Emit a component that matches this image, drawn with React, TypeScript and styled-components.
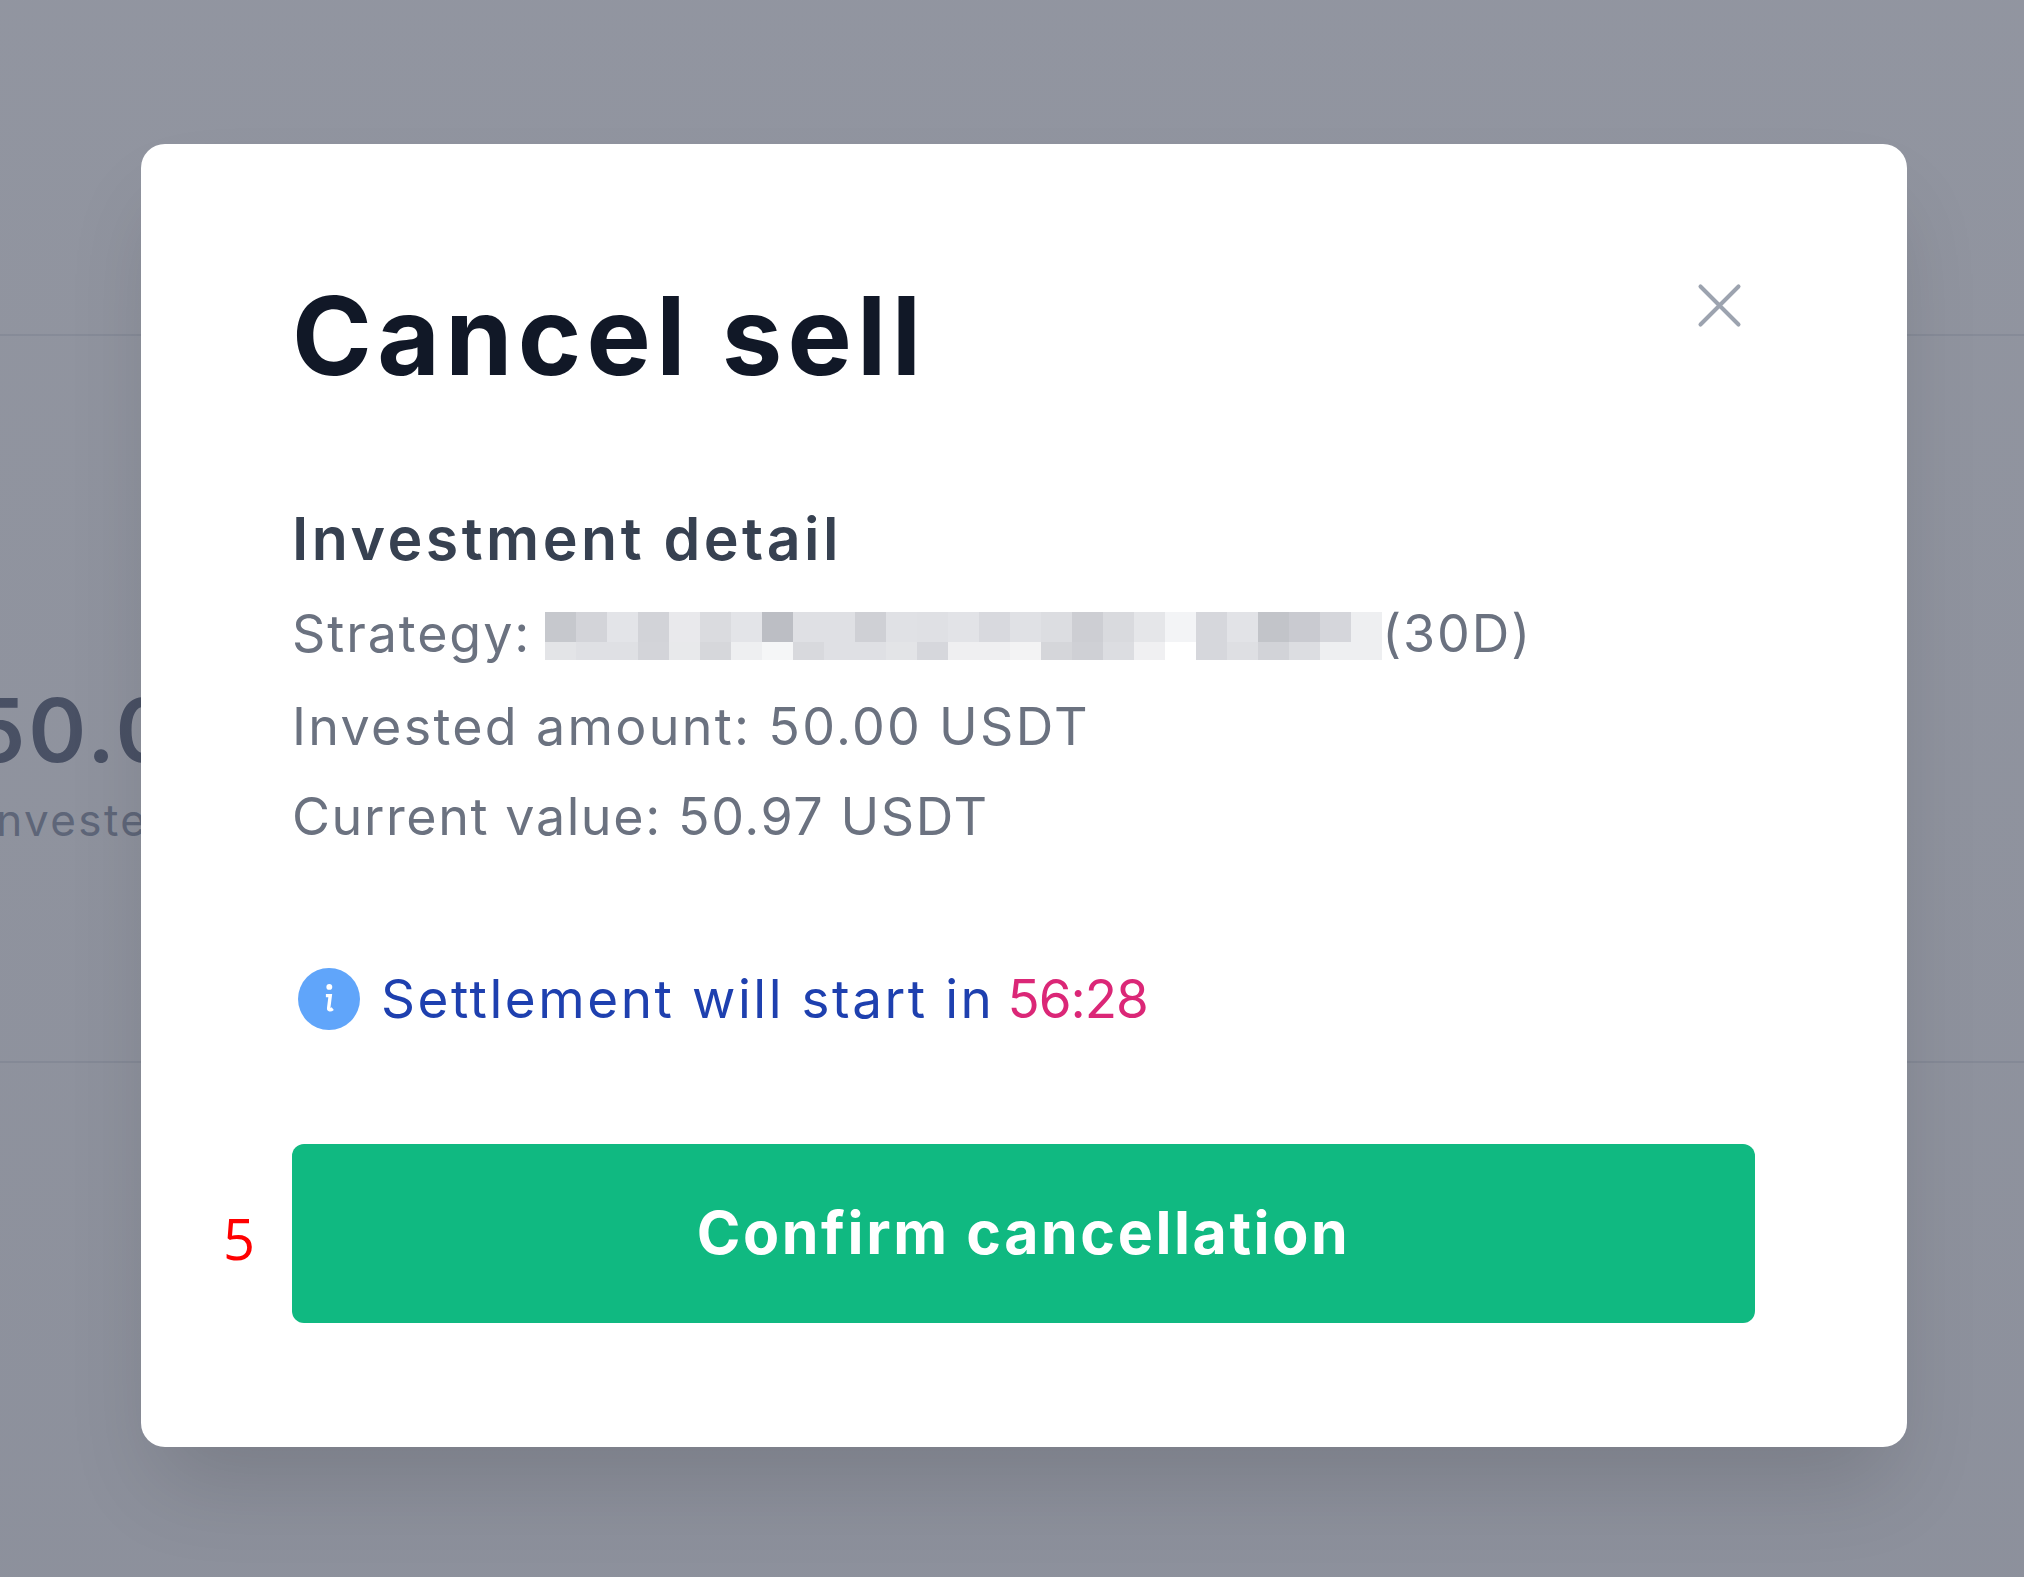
import styled, { createGlobalStyle } from "styled-components";

const GlobalStyle = createGlobalStyle`
  html, body {
    margin: 0;
    height: 100%;
    overflow: hidden;
    background: #fff;
    font-family: "Inter", "Noto Sans", sans-serif;
  }
  #root {
    height: 100%;
  }
`;

const Page = styled.div`
  position: relative;
  width: 2024px;
  height: 1577px;
  overflow: hidden;
  background: #fff;
`;

const Section = styled.div<{ $height: number }>`
  height: ${(p) => p.$height}px;
  border-bottom: 2px solid #eceef1;
  box-sizing: border-box;
  overflow: hidden;
`;

const Stat = styled.div`
  margin: 348px 0 0 -30px;
`;

const StatValue = styled.div`
  font-size: 88px;
  line-height: 92px;
  font-weight: 600;
  letter-spacing: 3px;
  color: #7b8292;
`;

const StatLabel = styled.div`
  margin: 18px 0 0 12px;
  font-size: 44px;
  line-height: 52px;
  letter-spacing: 2.4px;
  color: #a3aab8;
  white-space: nowrap;
`;

const Overlay = styled.div`
  position: absolute;
  inset: 0;
  padding: 144px 117px 0 141px;
  background: linear-gradient(rgba(16, 24, 48, 0.46), rgba(16, 24, 48, 0.48));
`;

const Modal = styled.div`
  box-sizing: border-box;
  height: 1303px;
  padding: 144px 152px 124px 151px;
  background: #fff;
  border-radius: 24px;
  box-shadow: 0 50px 90px -16px rgba(0, 0, 0, 0.14);
  display: flex;
  flex-direction: column;
`;

const Header = styled.div`
  display: flex;
  justify-content: space-between;
  align-items: flex-start;
`;

const Title = styled.h1`
  margin: 0;
  font-size: 108px;
  line-height: 96px;
  font-weight: 700;
  letter-spacing: 5.3px;
  color: #111827;
`;

const CloseButton = styled.button`
  display: flex;
  margin: -11px 7px 0 0;
  padding: 0;
  border: 0;
  background: none;
  color: #9ca3af;
`;

const Heading = styled.h2`
  margin: 120px 0 0;
  font-size: 59px;
  line-height: 70px;
  font-weight: 600;
  letter-spacing: 3.5px;
  color: #374151;
`;

const DetailRow = styled.div<{ $gap: number; $tracking: number }>`
  display: flex;
  align-items: center;
  margin-top: ${(p) => p.$gap}px;
  font-size: 52px;
  line-height: 62px;
  letter-spacing: ${(p) => p.$tracking}px;
  color: #6b7280;
  white-space: nowrap;
`;

const Mosaic = styled.div`
  display: grid;
  grid-template-columns: repeat(27, 31px);
  grid-template-rows: 30px 18px;
  margin: 4px 0 0 14px;
`;

const MosaicCell = styled.div<{ $tone: string }>`
  background: ${(p) => p.$tone};
`;

const Notice = styled.div`
  display: flex;
  align-items: center;
  margin: 120px 0 0 6px;
  font-size: 53px;
  line-height: 62px;
  letter-spacing: 2.55px;
  color: #1e40af;
  white-space: nowrap;
`;

const NoticeIcon = styled.svg`
  flex: none;
  width: 62px;
  height: 62px;
  margin-right: 21px;
`;

const Countdown = styled.span`
  margin-left: 13px;
  letter-spacing: -1px;
  color: #db2777;
`;

const ButtonRow = styled.div`
  position: relative;
  margin-top: auto;
`;

const ConfirmButton = styled.button`
  display: block;
  width: 100%;
  height: 179px;
  padding: 0 0 3px;
  border: 0;
  border-radius: 12px;
  background: #10b981;
  color: #fff;
  font-family: inherit;
  font-size: 59px;
  font-weight: 700;
  letter-spacing: 2.6px;
`;

const StepMark = styled.span`
  position: absolute;
  left: -69px;
  top: 54px;
  font-family: "Open Sans", sans-serif;
  font-size: 56px;
  line-height: 80px;
  color: #ff0000;
`;

const topTones = [
  "#c6c8cd", "#d3d4d9", "#e3e4e8", "#d2d3d8", "#e9e9ec", "#dadbdf", "#e3e4e8", "#bcbec4", "#dfe0e4",
  "#dfe0e4", "#cfd0d5", "#e0e1e5", "#dfe0e4", "#e2e3e7", "#d8d9de", "#e0e1e5", "#dcdde1", "#cdced3",
  "#d9dade", "#e5e6e9", "#f3f4f6", "#d6d7dc", "#e2e3e7", "#c2c4c9", "#c9cad0", "#d5d6db", "#eeeff1",
];

const bottomTones = [
  "#e3e4e7", "#dfe0e4", "#dfe0e4", "#d3d4d9", "#e8e9eb", "#d6d7db", "#eeeff1", "#f5f6f7", "#d8d9dd",
  "#dfe0e4", "#dfe0e4", "#e3e4e7", "#d6d7dc", "#efeff1", "#efeff1", "#f3f3f4", "#d5d6da", "#cfd0d5",
  "#dcdde1", "#f0f0f2", "#ffffff", "#d6d7dc", "#dedfe3", "#d2d3d8", "#dcdde1", "#eeeff1", "#eeeff1",
];

const App = () => {
  return (
    <Page>
      <GlobalStyle />
      <Section $height={336} />
      <Section $height={727}>
        <Stat>
          <StatValue>50.00</StatValue>
          <StatLabel>Invested</StatLabel>
        </Stat>
      </Section>
      <Overlay>
        <Modal>
          <Header>
            <Title>Cancel sell</Title>
            <CloseButton aria-label="Close">
              <svg width="57" height="57" viewBox="0 0 24 24" fill="none" stroke="currentColor" strokeWidth="1.7" strokeLinecap="round">
                <path d="M4 4l16 16M20 4L4 20" />
              </svg>
            </CloseButton>
          </Header>
          <Heading>Investment detail</Heading>
          <DetailRow $gap={29} $tracking={1.9}>
            Strategy:
            <Mosaic>
              {[...topTones, ...bottomTones].map((tone, i) => (
                <MosaicCell key={i} $tone={tone} />
              ))}
            </Mosaic>
            (30D)
          </DetailRow>
          <DetailRow $gap={31} $tracking={2.3}>Invested amount: 50.00 USDT</DetailRow>
          <DetailRow $gap={28} $tracking={1.6}>Current value: 50.97 USDT</DetailRow>
          <Notice>
            <NoticeIcon viewBox="0 0 20 20">
              <circle cx="10" cy="10" r="10" fill="#60a5fa" />
              <circle cx="10.1" cy="6.1" r="0.95" fill="#fff" />
              <path d="M9 8.9h1.4l-.5 4c-.1.7.6.8 1.3.2" fill="none" stroke="#fff" strokeWidth="1.1" />
            </NoticeIcon>
            Settlement will start in<Countdown>56:28</Countdown>
          </Notice>
          <ButtonRow>
            <StepMark>5</StepMark>
            <ConfirmButton>Confirm cancellation</ConfirmButton>
          </ButtonRow>
        </Modal>
      </Overlay>
    </Page>
  );
};

export default App;
